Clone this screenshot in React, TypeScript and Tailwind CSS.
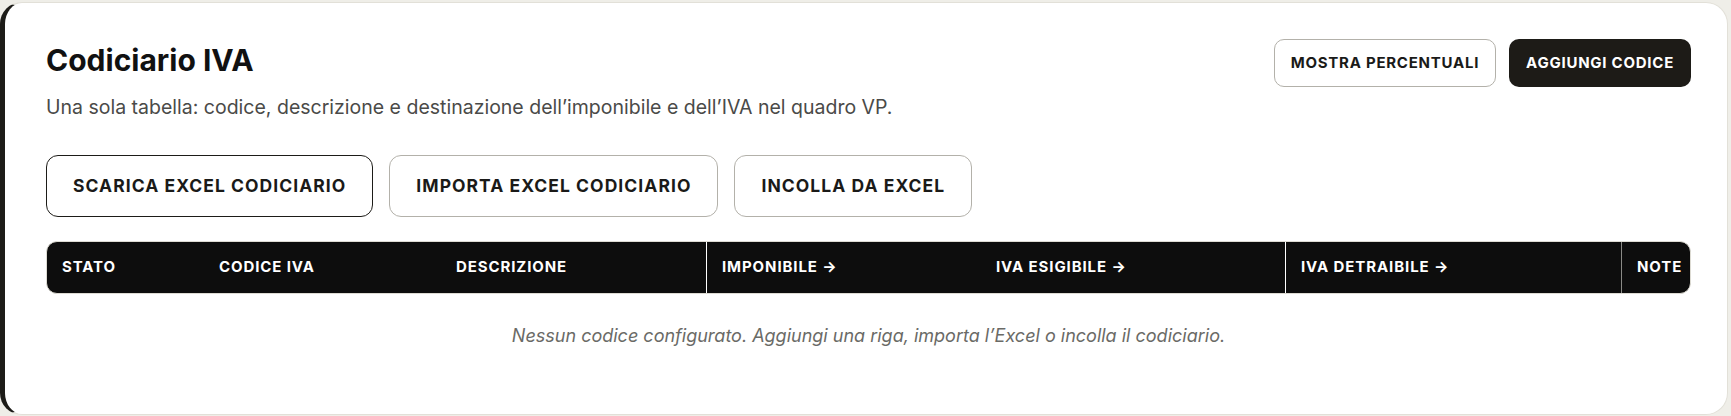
import React from "react";

const headers: { label: string; w: string; border?: string }[] = [
  { label: "STATO", w: "w-[157px]" },
  { label: "CODICE IVA", w: "w-[237px]" },
  { label: "DESCRIZIONE", w: "w-[265px]" },
  { label: "IMPONIBILE →", w: "w-[275px]", border: "border-l border-l-white" },
  { label: "IVA ESIGIBILE →", w: "w-[304px]" },
  { label: "IVA DETRAIBILE →", w: "w-[336px]", border: "border-l border-l-white" },
  { label: "NOTE", w: "w-[120px]", border: "border-l border-l-[#8a8a86]" },
];

export default function App() {
  return (
    <div
      className="min-h-[416px] w-full bg-[#efeee8] pt-[2px] pr-[3px] pb-[2px]"
      style={{ fontFamily: "Inter, 'Noto Sans', sans-serif" }}
    >
      <div className="rounded-[22px] border border-[#e2e0d8] border-l-[5px] border-l-[#1d1c18] bg-white pl-[41px] pr-[36px] pt-[36px] pb-[66px]">
        <div className="flex items-start justify-between">
          <div>
            <h1 className="mt-[3px] text-[30px] leading-[36px] font-bold text-[#111111]">
              Codiciario IVA
            </h1>
            <p className="mt-[14px] text-[19.5px] leading-[30px] text-[#4a4a48]">
              Una sola tabella: codice, descrizione e destinazione dell’imponibile e dell’IVA nel quadro VP.
            </p>
          </div>
          <div className="flex items-center gap-[13px]">
            <button className="h-[48px] rounded-[10px] border border-[#b3b1aa] bg-white px-[16px] text-[15px] font-bold tracking-[0.05em] text-[#1a1a18]">
              MOSTRA PERCENTUALI
            </button>
            <button className="h-[48px] rounded-[10px] bg-[#1d1b17] px-[17px] text-[15px] font-bold tracking-[0.05em] text-white">
              AGGIUNGI CODICE
            </button>
          </div>
        </div>

        <div className="mt-[33px] flex gap-[16px]">
          <button className="h-[62px] rounded-[12px] border border-[#1d1c18] bg-white px-[26px] text-[17.5px] font-bold tracking-[0.06em] text-[#1a1a18]">
            SCARICA EXCEL CODICIARIO
          </button>
          <button className="h-[62px] rounded-[12px] border border-[#b3b1aa] bg-white px-[26px] text-[17.5px] font-bold tracking-[0.06em] text-[#1a1a18]">
            IMPORTA EXCEL CODICIARIO
          </button>
          <button className="h-[62px] rounded-[12px] border border-[#b3b1aa] bg-white px-[26px] text-[17.5px] font-bold tracking-[0.06em] text-[#1a1a18]">
            INCOLLA DA EXCEL
          </button>
        </div>

        <div className="mt-[24px] overflow-hidden rounded-[11px] border border-[#dddbd3] bg-[#0d0d0d]">
          <div className="flex h-[51px] items-center">
            {headers.map((h) => (
              <div
                key={h.label}
                className={`flex h-full shrink-0 items-center pl-[15px] text-[15px] font-bold tracking-[0.06em] text-white ${h.w} ${h.border ?? ""}`}
              >
                {h.label}
              </div>
            ))}
          </div>
        </div>

        <p className="pt-[30px] text-center text-[18px] leading-[24px] italic text-[#6a6a66]">
          Nessun codice configurato. Aggiungi una riga, importa l’Excel o incolla il codiciario.
        </p>
      </div>
    </div>
  );
}
